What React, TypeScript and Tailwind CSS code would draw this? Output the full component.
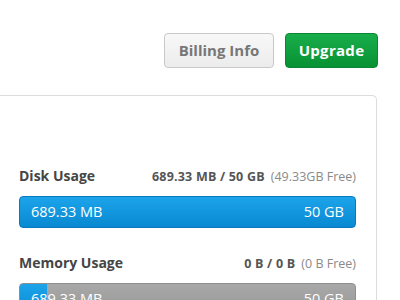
import React from "react";

function UsageBar({ used, total, pct, gray }: { used: string; total: string; pct: number; gray?: boolean }) {
  if (!gray) {
    return (
      <div className="h-[32px] rounded-[4px] border border-[#0a78bd] bg-gradient-to-b from-[#1ca4ea] to-[#0889d1] flex items-center justify-between px-[11px] text-white text-[14.5px]">
        <span>{used}</span>
        <span>{total}</span>
      </div>
    );
  }
  return (
    <div className="relative h-[32px] rounded-[4px] border border-[#8e8e8e] bg-gradient-to-b from-[#a8a8a8] to-[#999999] flex items-center justify-between px-[11px] text-white text-[14.5px] overflow-hidden">
      <div className="absolute left-0 top-0 bottom-0 bg-gradient-to-b from-[#1ca4ea] to-[#0889d1]" style={{ width: `${pct}%` }} />
      <span className="relative">{used}</span>
      <span className="relative">{total}</span>
    </div>
  );
}

export default function App() {
  return (
    <div className="w-[400px] h-[300px] bg-white overflow-hidden" style={{ fontFamily: "'Open Sans', Lato, sans-serif" }}>
      <div className="flex justify-end gap-[11px] pt-[33px] pr-[22px]">
        <button className="h-[35px] w-[110px] rounded-[4px] border border-[#c8c8c8] bg-gradient-to-b from-[#f8f8f8] to-[#ececec] text-[#777] font-bold text-[15px]">
          Billing Info
        </button>
        <button className="h-[35px] w-[93px] rounded-[4px] border border-[#0a8634] bg-gradient-to-b from-[#19ad4b] to-[#079233] text-white font-bold text-[15px] tracking-[0.3px]">
          Upgrade
        </button>
      </div>
      <div className="mt-[27px] mr-[23px] border-t border-r border-[#dcdcdc] rounded-tr-[5px] pl-[19px] pr-[20px] pt-[69px] h-[300px]">
        <div className="flex items-baseline justify-between h-[20px]">
          <span className="text-[14px] font-bold text-[#454545]">Disk Usage</span>
          <span className="text-[12.5px] text-[#555]">
            <span className="font-bold tracking-[0.2px]">689.33 MB / 50 GB</span>
            <span className="ml-[6px] text-[#8a8a8a]">(49.33GB Free)</span>
          </span>
        </div>
        <div className="mt-[11px]">
          <UsageBar used="689.33 MB" total="50 GB" pct={100} />
        </div>
        <div className="flex items-baseline justify-between h-[20px] mt-[24px]">
          <span className="text-[14px] font-bold text-[#454545]">Memory Usage</span>
          <span className="text-[12.5px] text-[#555]">
            <span className="font-bold tracking-[0.2px]">0 B / 0 B</span>
            <span className="ml-[6px] text-[#8a8a8a]">(0 B Free)</span>
          </span>
        </div>
        <div className="mt-[11px]">
          <UsageBar used="689.33 MB" total="50 GB" pct={8} gray />
        </div>
      </div>
    </div>
  );
}
